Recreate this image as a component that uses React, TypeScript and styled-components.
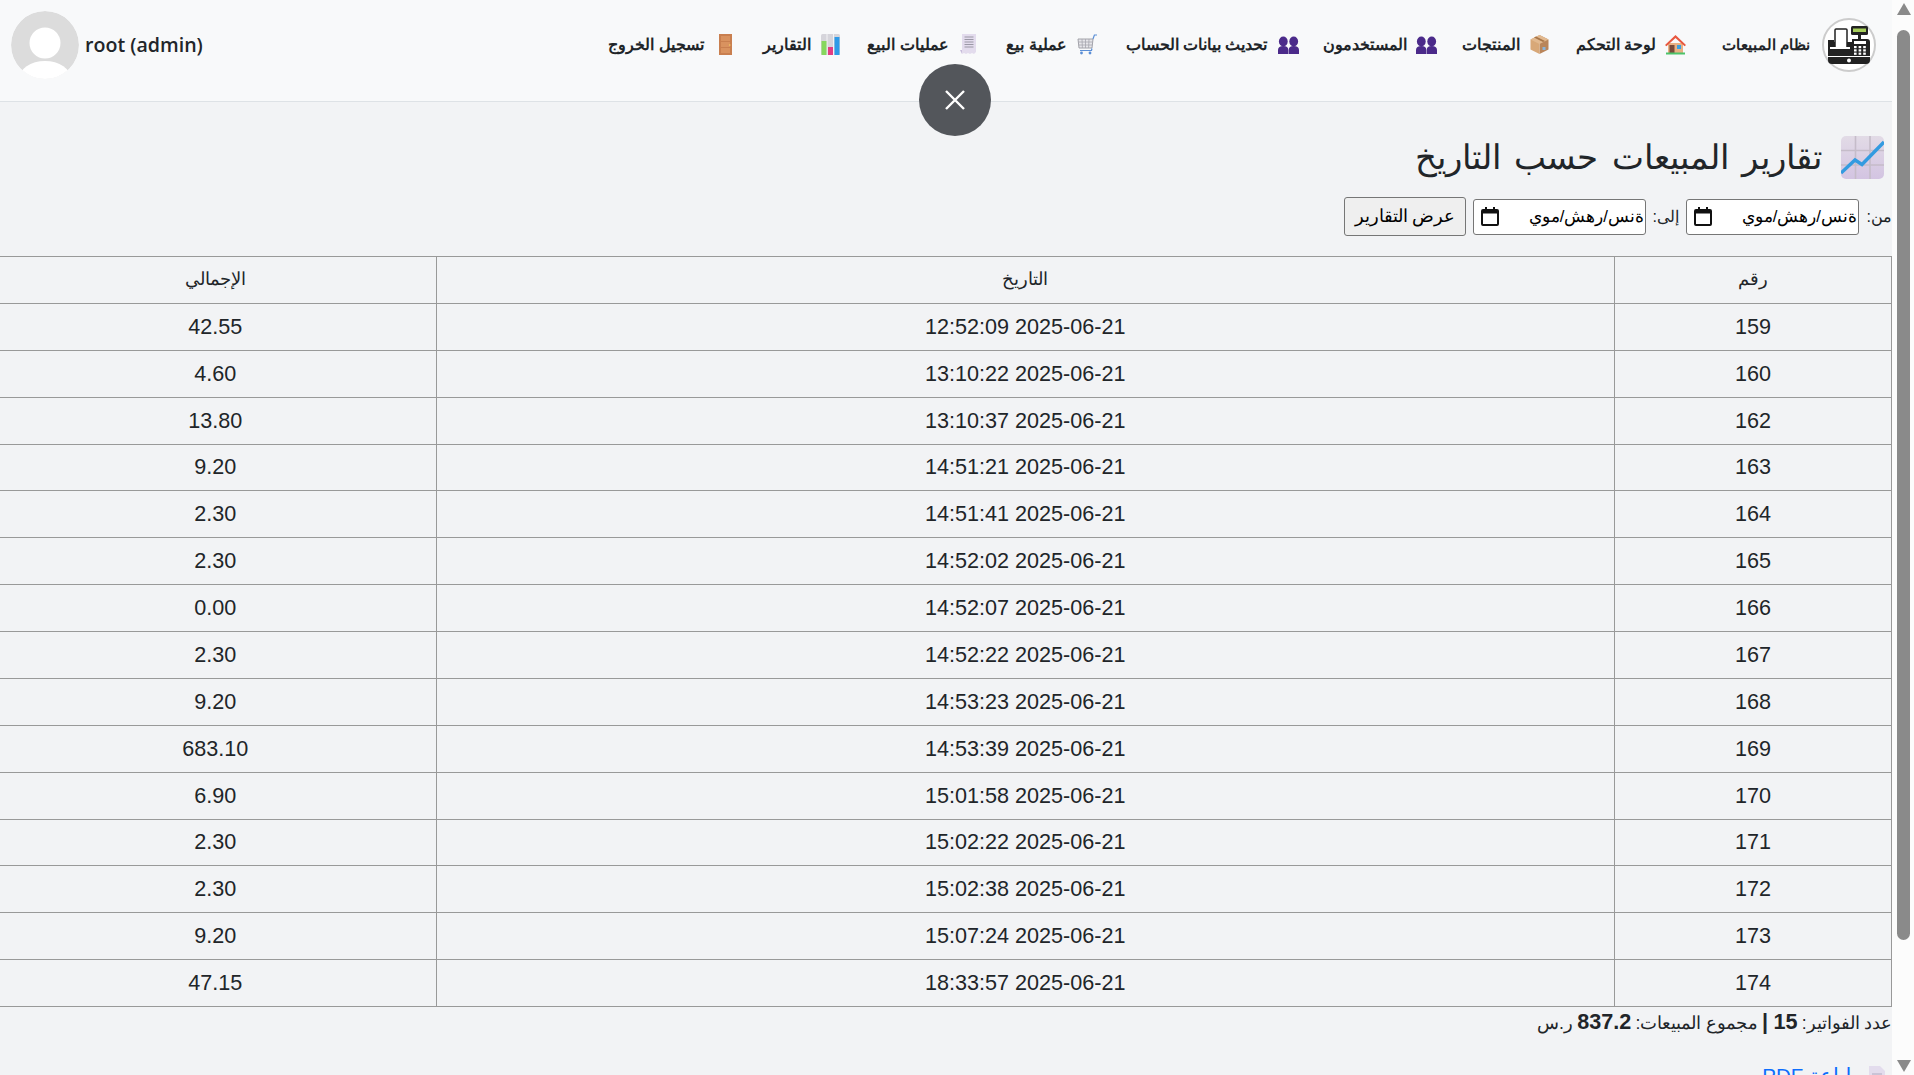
import React from 'react'
import styled, { createGlobalStyle } from 'styled-components'

const rows = [
  ['159', '2025-06-21 12:52:09', '42.55'],
  ['160', '2025-06-21 13:10:22', '4.60'],
  ['162', '2025-06-21 13:10:37', '13.80'],
  ['163', '2025-06-21 14:51:21', '9.20'],
  ['164', '2025-06-21 14:51:41', '2.30'],
  ['165', '2025-06-21 14:52:02', '2.30'],
  ['166', '2025-06-21 14:52:07', '0.00'],
  ['167', '2025-06-21 14:52:22', '2.30'],
  ['168', '2025-06-21 14:53:23', '9.20'],
  ['169', '2025-06-21 14:53:39', '683.10'],
  ['170', '2025-06-21 15:01:58', '6.90'],
  ['171', '2025-06-21 15:02:22', '2.30'],
  ['172', '2025-06-21 15:02:38', '2.30'],
  ['173', '2025-06-21 15:07:24', '9.20'],
  ['174', '2025-06-21 18:33:57', '47.15'],
]

const GlobalStyle = createGlobalStyle`
  body {
    margin: 0;
    background: #fcfcfc;
    color: #212529;
    font-family: "Liberation Sans", Arial, sans-serif;
  }
`

const Shell = styled.div`
  display: flex;
  height: 100vh;
  overflow: hidden;
`

const Page = styled.div`
  width: 1892px;
  flex: none;
  height: 1075px;
  overflow: hidden;
  background: #f2f3f5;
  direction: rtl;
`

const Navbar = styled.nav`
  height: 102px;
  box-sizing: border-box;
  background: #f8f9fa;
  border-bottom: 1px solid #dee2e6;
  display: flex;
  align-items: center;
  padding: 0 16px 12px 11px;
  position: relative;
`

const Brand = styled.div`
  display: flex;
  align-items: center;
  gap: 12px;
  margin-left: 36px;
  font-size: 15.4px;
  font-weight: 700;
`

const BrandLogo = styled.span`
  width: 54px;
  height: 54px;
  box-sizing: border-box;
  border: 2px solid #ccc;
  border-radius: 50%;
  background: #fff;
  display: flex;
  align-items: center;
  justify-content: center;
`

const NavLinks = styled.div`
  display: flex;
  align-items: center;
  gap: 26px;
`

const NavItem = styled.a`
  display: flex;
  align-items: center;
  gap: 9px;
  font-size: 16px;
  font-weight: 700;
  color: #212529;
`

const NavLabel = styled.span<{ $w: number }>`
  width: ${p => p.$w}px;
  flex: none;
  white-space: nowrap;
  text-align: center;
`

const UserBox = styled.div`
  margin-right: auto;
  display: flex;
  align-items: center;
  gap: 6px;
  direction: ltr;
  font-family: "Open Sans", sans-serif;
  font-size: 19.6px;
  font-weight: 600;
`

const Avatar = styled.span`
  width: 68px;
  height: 68px;
  border-radius: 50%;
  overflow: hidden;
  display: block;
`

const CloseButton = styled.button`
  position: absolute;
  left: 919px;
  top: 64px;
  width: 72px;
  height: 72px;
  padding: 0;
  border: 0;
  border-radius: 50%;
  background: #53565b;
  display: flex;
  align-items: center;
  justify-content: center;
`

const Title = styled.h1`
  margin: 31px 8px 0 0;
  height: 48px;
  display: flex;
  align-items: center;
  gap: 19px;
  font-size: 34px;
  font-weight: 400;
  word-spacing: 4px;
`

const FilterRow = styled.form`
  margin-top: 16px;
  height: 39px;
  display: flex;
  align-items: center;
  gap: 7px;
`

const FilterLabel = styled.label`
  width: 26px;
  flex: none;
  white-space: nowrap;
  font-size: 16px;
  color: #212529;
`

const DateField = styled.div`
  width: 173px;
  height: 36px;
  box-sizing: border-box;
  border: 1px solid #767676;
  border-radius: 3px;
  background: #fff;
  color: #000;
  padding: 0 1px 0 7px;
  display: flex;
  align-items: center;
  justify-content: space-between;
  font-size: 16.8px;
`

const SubmitButton = styled.button`
  width: 122px;
  height: 39px;
  padding: 0;
  border: 1px solid #767676;
  border-radius: 3px;
  background: #efefef;
  color: #000;
  font-family: inherit;
  font-size: 17.5px;
`

const Table = styled.table`
  margin-top: 20px;
  width: 1894px;
  table-layout: fixed;
  border-collapse: collapse;
`

const Th = styled.th<{ $w: number }>`
  width: ${p => p.$w}px;
  height: 43.875px;
  padding: 0 0 2px;
  border: 1px solid #999;
  text-align: center;
  font-size: 18px;
  font-weight: 400;
`

const Td = styled.td`
  height: 45.875px;
  padding: 0;
  border: 1px solid #999;
  text-align: center;
  font-size: 21.6px;
`

const Summary = styled.p`
  margin: 3px 0 0;
  line-height: 24px;
  font-size: 17.6px;
  word-spacing: -0.6px;
  b { font-size: 21.6px; }
`

const PdfLink = styled.a`
  margin: 29px 7px 0 0;
  display: flex;
  align-items: center;
  gap: 7px;
  line-height: 24px;
  font-size: 20.5px;
  color: #0d6efd;
`

const ScrollTrack = styled.div`
  width: 22px;
  flex: none;
  height: 1075px;
  position: relative;
`

const ScrollThumb = styled.div`
  position: absolute;
  left: 5px;
  top: 30px;
  width: 13px;
  height: 910px;
  border-radius: 7px;
  background: #8a8a8a;
`

const ScrollArrow = styled.div<{ $down?: boolean }>`
  position: absolute;
  left: 5px;
  ${p => (p.$down ? 'bottom: 3px;' : 'top: 3px;')}
  width: 0;
  height: 0;
  border-left: 7px solid transparent;
  border-right: 7px solid transparent;
  ${p => (p.$down ? 'border-top: 12px solid #8a8a8a;' : 'border-bottom: 12px solid #8a8a8a;')}
`

const RegisterIcon = () => (
  <svg width="44" height="40" viewBox="0 0 44 40">
    <rect x="24" y="1" width="17" height="9" rx="1.5" fill="#222" />
    <rect x="26" y="3.5" width="13" height="3.5" fill="#a6ce5a" />
    <rect x="31" y="10" width="3" height="4" fill="#222" />
    <path d="M1 15h6v2h18v-3h15a3 3 0 0 1 3 3v14H1z" fill="#222" />
    <rect x="8" y="4" width="12" height="20" rx="1" fill="#fff" stroke="#222" strokeWidth="1.5" />
    <rect x="3" y="22" width="20" height="2" fill="#fff" />
    <rect x="27" y="16" width="12" height="3" fill="#fff" />
    {[0, 1, 2].map(c =>
      [0, 1, 2].map(r => <rect key={`${c}${r}`} x={27 + c * 4.6} y={21 + r * 3.3} width="2.6" height="2.2" fill="#fff" />),
    )}
    <path d="M1 32h42v3a4 4 0 0 1-4 4H5a4 4 0 0 1-4-4z" fill="#222" />
    <circle cx="22" cy="35.5" r="2" fill="#fff" />
  </svg>
)

const HouseIcon = () => (
  <svg width="21" height="21" viewBox="0 0 21 21">
    <rect x="3" y="9" width="15" height="10" fill="#e9b083" />
    <path d="M10.5 1 21 11l-1.4 1.3-9.1-8.4-9.1 8.4L0 11z" fill="#e8573f" />
    <rect x="4.5" y="11" width="5" height="8" fill="#7a4a3a" />
    <rect x="12" y="11" width="4" height="4" fill="#3aa0e0" />
    <rect x="1" y="18.5" width="19" height="2" fill="#4cc46a" />
  </svg>
)

const BoxIcon = () => (
  <svg width="21" height="21" viewBox="0 0 21 21">
    <path d="M10.5 1 19.5 5.5v10L10.5 20z" fill="#b9855a" />
    <path d="M10.5 1 1.5 5.5v10l9 4.5z" fill="#d8a878" />
    <path d="M1.5 5.5 10.5 10l9-4.5-9-4.5z" fill="#e2b98f" />
    <path d="m5 3.5 9 4.5 2-1-9-4.5z" fill="#a87649" />
    <rect x="13.5" y="13" width="3" height="3" fill="#8ab4d8" />
  </svg>
)

const PeopleIcon = () => (
  <svg width="21" height="21" viewBox="0 0 21 21" fill="#4b2a8a">
    <ellipse cx="5.3" cy="7.5" rx="4.4" ry="5" />
    <path d="M0 20v-4C0 13.5 2 12 5.3 12s5 1.5 5 4v4z" />
    <ellipse cx="15.7" cy="7.5" rx="4.4" ry="5" />
    <path d="M10.7 20v-4c0-2.5 1.7-4 5-4S21 13.5 21 16v4z" />
  </svg>
)

const CartIcon = () => (
  <svg width="21" height="21" viewBox="0 0 21 21" fill="none">
    <path d="M1 5h15l-1 9H2z" fill="#e6e6ea" stroke="#9a9aa2" strokeWidth=".9" />
    <path d="M1.3 8h14.4M1.7 11h13.6M5 5l.4 9M8.5 5v9M12 5l-.4 9" stroke="#a6a6ae" strokeWidth=".8" />
    <path d="m16 5 1.4-4H20M15 14.5l-.5 2H3" stroke="#5b8fd6" strokeWidth="1.2" />
    <circle cx="4.5" cy="19" r="1.4" fill="#5b8fd6" />
    <circle cx="13" cy="19" r="1.4" fill="#5b8fd6" />
  </svg>
)

const ReceiptIcon = () => (
  <svg width="21" height="21" viewBox="0 0 21 21">
    <path d="M4 0h14v18l-2 2-2-1-2 1-2-1-2 1-2-1-2 1z" fill="#e3dced" />
    <path d="M2 16h2v4z" fill="#c8bddb" />
    <path d="M6.5 3h9M6.5 5.5h9M6.5 8h9M6.5 10.5h9M6.5 13h9" stroke="#9b98a6" strokeWidth="1.2" />
  </svg>
)

const ChartIcon = () => (
  <svg width="21" height="21" viewBox="0 0 21 21">
    <rect x="1" y="0" width="19" height="21" rx="1.5" fill="#d6d5db" />
    <path d="M7 0v21M13.5 0v21" stroke="#f3f3f5" strokeWidth="1" />
    <rect x="1.5" y="7" width="5" height="14" fill="#86d75e" />
    <rect x="8" y="13" width="5" height="8" fill="#e33d83" />
    <rect x="14.5" y="3" width="5" height="18" fill="#2f9be8" />
  </svg>
)

const DoorIcon = () => (
  <svg width="21" height="21" viewBox="0 0 21 21">
    <rect x="4" y="0" width="13" height="21" fill="#c97f4f" />
    <rect x="6" y="2" width="9" height="5" fill="#d9925f" />
    <rect x="6" y="8" width="9" height="5" fill="#d9925f" />
    <rect x="6" y="14" width="9" height="5" fill="#d9925f" />
    <circle cx="14.8" cy="11" r=".8" fill="#f2d060" />
  </svg>
)

const TrendIcon = () => (
  <svg width="43" height="43" viewBox="0 0 43 43">
    <defs>
      <linearGradient id="trendBg" x1="0" y1="0" x2="0" y2="1">
        <stop offset="0" stopColor="#e2dbe6" />
        <stop offset="1" stopColor="#d3c4e2" />
      </linearGradient>
    </defs>
    <rect width="43" height="43" rx="5" fill="url(#trendBg)" />
    <path d="M14.5 0v43M29 0v43M0 14.5h43M0 29h43" stroke="#c5bcc9" strokeWidth="1.6" />
    <path d="M0 37 14 24l7 4.5L43 6" stroke="#339be0" strokeWidth="3.4" fill="none" />
  </svg>
)

const DocIcon = () => (
  <svg width="16" height="20" viewBox="0 0 16 20">
    <path d="M0 0h11l5 5v15H0z" fill="#e3dced" />
    <path d="M3 8h10M3 11h10M3 14h10" stroke="#b0abc0" strokeWidth="1" />
  </svg>
)

const CalendarIcon = () => (
  <svg width="18" height="19" viewBox="0 0 18 19" fill="none">
    <rect x="1" y="3" width="16" height="15" rx="1" stroke="#111" strokeWidth="2" />
    <rect x="1" y="3" width="16" height="3.5" fill="#111" />
    <path d="M5 0v3M13 0v3" stroke="#111" strokeWidth="2" />
  </svg>
)

const navItems = [
  { label: 'لوحة التحكم', width: 80, icon: <HouseIcon /> },
  { label: 'المنتجات', width: 57, icon: <BoxIcon /> },
  { label: 'المستخدمون', width: 82, icon: <PeopleIcon /> },
  { label: 'تحديث بيانات الحساب', width: 145, icon: <PeopleIcon /> },
  { label: 'عملية بيع', width: 63, icon: <CartIcon /> },
  { label: 'عمليات البيع', width: 82, icon: <ReceiptIcon /> },
  { label: 'التقارير', width: 49, icon: <ChartIcon /> },
  { label: 'تسجيل الخروج', width: 100, icon: <DoorIcon /> },
]

export default function App() {
  return (
    <Shell>
      <GlobalStyle />
      <Page>
        <Navbar>
          <Brand>
            <BrandLogo>
              <RegisterIcon />
            </BrandLogo>
            <NavLabel $w={88}>نظام المبيعات</NavLabel>
          </Brand>
          <NavLinks>
            {navItems.map(item => (
              <NavItem key={item.label}>
                {item.icon}
                <NavLabel $w={item.width}>{item.label}</NavLabel>
              </NavItem>
            ))}
          </NavLinks>
          <UserBox>
            <Avatar>
              <svg width="68" height="68" viewBox="0 0 68 68">
                <circle cx="34" cy="34" r="34" fill="#dcdcdc" />
                <circle cx="34" cy="32" r="15.5" fill="#fff" />
                <ellipse cx="34" cy="68" rx="26" ry="18" fill="#fff" />
              </svg>
            </Avatar>
            root (admin)
          </UserBox>
          <CloseButton type="button" aria-label="إغلاق">
            <svg width="24" height="24" viewBox="0 0 24 24" stroke="#fff" strokeWidth="2.4">
              <path d="M3 3l18 18M21 3 3 21" />
            </svg>
          </CloseButton>
        </Navbar>
        <Title>
          <TrendIcon />
          تقارير المبيعات حسب التاريخ
        </Title>
        <FilterRow>
          <FilterLabel>من:</FilterLabel>
          <DateField>
            ةنس/رهش/موي
            <CalendarIcon />
          </DateField>
          <FilterLabel>إلى:</FilterLabel>
          <DateField>
            ةنس/رهش/موي
            <CalendarIcon />
          </DateField>
          <SubmitButton type="button">عرض التقارير</SubmitButton>
        </FilterRow>
        <Table>
          <thead>
            <tr>
              <Th $w={276}>رقم</Th>
              <Th $w={1177.5}>التاريخ</Th>
              <Th $w={440.5}>الإجمالي</Th>
            </tr>
          </thead>
          <tbody>
            {rows.map(r => (
              <tr key={r[0]}>
                <Td>{r[0]}</Td>
                <Td>{r[1]}</Td>
                <Td>{r[2]}</Td>
              </tr>
            ))}
          </tbody>
        </Table>
        <Summary>
          عدد الفواتير: <b>15 |</b> مجموع المبيعات: <b>837.2</b> ر.س
        </Summary>
        <PdfLink>
          <DocIcon />
          طباعة PDF
        </PdfLink>
      </Page>
      <ScrollTrack>
        <ScrollArrow />
        <ScrollThumb />
        <ScrollArrow $down />
      </ScrollTrack>
    </Shell>
  )
}
